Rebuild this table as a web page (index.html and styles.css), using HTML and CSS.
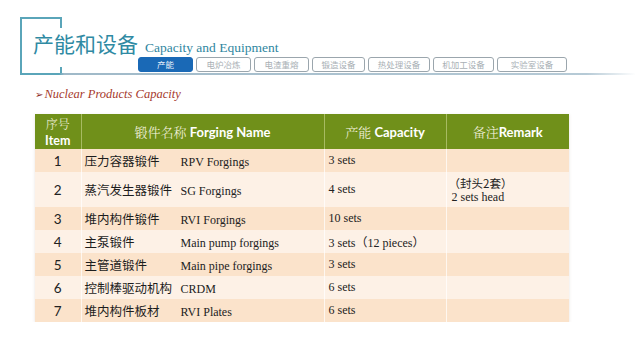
FILE: index.html
```html
<!DOCTYPE html>
<html lang="zh">
<head>
    <meta charset="UTF-8">
    <title>产能和设备 Capacity and Equipment</title>
    <link rel="stylesheet" href="styles.css">
</head>
<body>
    <header class="head">
        <div class="frame"></div>
        <h1 class="title"><span class="title-cn">产能和设备</span><span class="title-en">Capacity and Equipment</span></h1>
        <nav class="tabs">
            <span class="tab active" style="width:55px">产能</span>
            <span class="tab" style="width:55px">电炉冶炼</span>
            <span class="tab" style="width:55px">电渣重熔</span>
            <span class="tab" style="width:53px">锻造设备</span>
            <span class="tab" style="width:62px">热处理设备</span>
            <span class="tab" style="width:61px">机加工设备</span>
            <span class="tab" style="width:70px">实验室设备</span>
        </nav>
    </header>

    <main class="content">
        <p class="subtitle"><span class="arrow">➢</span>Nuclear Products Capacity</p>

        <table class="cap">
            <colgroup>
                <col style="width:46px">
                <col style="width:243px">
                <col style="width:122px">
                <col style="width:123px">
            </colgroup>
            <thead>
                <tr>
                    <th class="item"><span class="cn">序号</span><span class="en">Item</span></th>
                    <th><span class="cn">锻件名称</span> <span class="en">Forging Name</span></th>
                    <th><span class="cn">产能</span> <span class="en">Capacity</span></th>
                    <th><span class="cn">备注</span><span class="en">Remark</span></th>
                </tr>
            </thead>
            <tbody>
                <tr>
                    <td class="num">1</td>
                    <td class="name"><span class="name-cn">压力容器锻件</span><span class="name-en">RPV Forgings</span></td>
                    <td class="qty">3 sets</td>
                    <td></td>
                </tr>
                <tr class="tall">
                    <td class="num">2</td>
                    <td class="name"><span class="name-cn">蒸汽发生器锻件</span><span class="name-en">SG Forgings</span></td>
                    <td class="qty">4 sets</td>
                    <td class="note"><span class="note-cn">（封头2套）</span><span class="note-en">2 sets head</span></td>
                </tr>
                <tr>
                    <td class="num">3</td>
                    <td class="name"><span class="name-cn">堆内构件锻件</span><span class="name-en">RVI Forgings</span></td>
                    <td class="qty">10 sets</td>
                    <td></td>
                </tr>
                <tr>
                    <td class="num">4</td>
                    <td class="name"><span class="name-cn">主泵锻件</span><span class="name-en">Main pump forgings</span></td>
                    <td class="qty">3 sets（12 pieces）</td>
                    <td></td>
                </tr>
                <tr>
                    <td class="num">5</td>
                    <td class="name"><span class="name-cn">主管道锻件</span><span class="name-en">Main pipe forgings</span></td>
                    <td class="qty">3 sets</td>
                    <td></td>
                </tr>
                <tr>
                    <td class="num">6</td>
                    <td class="name"><span class="name-cn">控制棒驱动机构</span><span class="name-en">CRDM</span></td>
                    <td class="qty">6 sets</td>
                    <td></td>
                </tr>
                <tr>
                    <td class="num">7</td>
                    <td class="name"><span class="name-cn">堆内构件板材</span><span class="name-en">RVI Plates</span></td>
                    <td class="qty">6 sets</td>
                    <td></td>
                </tr>
            </tbody>
        </table>
    </main>
</body>
</html>
```

FILE: styles.css
```css
body {
    margin: 0;
    background: #ffffff;
    font-family: "Liberation Serif", "Noto Sans CJK SC", serif;
    color: #222;
}

/* header with the bracket frame */
.head {
    position: relative;
    margin: 17px 5px 0 20px;
    padding: 12px 0 1px;
    border-bottom: 2px solid #a9c0cd;
    border-image: linear-gradient(to right, #5aa5b9 0, #5aa5b9 40px, #9fb9c8 45px, #b6cad6 92%, rgba(220,230,236,0) 100%) 1;
}
.frame {
    position: absolute;
    left: 0;
    top: 0;
    bottom: 0;
    width: 38px;
    border-left: 2px solid #5aa5b9;
    border-top: 2px solid #5aa5b9;
}
.frame::before,
.frame::after {
    content: "";
    position: absolute;
    right: -2px;
    width: 2px;
    background: #5aa5b9;
}
.frame::before {
    top: -2px;
    height: 13px;
}
.frame::after {
    bottom: 0;
    height: 6px;
}
.title {
    position: relative;
    margin: 0 0 4px 13px;
    font-weight: normal;
    line-height: 24px;
    height: 24px;
    color: #2f8aa3;
    white-space: nowrap;
}
.title-cn {
    font-family: "Noto Sans CJK SC", sans-serif;
    font-size: 21px;
    font-weight: 400;
    background: #fff;
}
.title-en {
    font-family: "Liberation Serif", serif;
    font-size: 13.5px;
    margin-left: 7px;
    color: #2f86a0;
}

.tabs {
    display: flex;
    gap: 3px;
    margin-left: 118px;
}
.tab {
    box-sizing: border-box;
    height: 15px;
    border: 1px solid #9ba6ad;
    border-radius: 3px;
    background: #fff;
    font-family: "Noto Sans CJK SC", sans-serif;
    font-size: 8.5px;
    line-height: 13px;
    text-align: center;
    color: #a9b0b5;
}
.tab.active {
    background: #1a69b6;
    border-color: #1a69b6;
    color: #eaf2fb;
}

/* content */
.content {
    padding-left: 35px;
}
.subtitle {
    margin: 11px 0 11px;
    line-height: 16px;
    font-style: italic;
    font-size: 12.5px;
    color: #a63a2c;
}
.arrow {
    font-family: "DejaVu Sans", sans-serif;
    font-style: normal;
    font-size: 10px;
    color: #8c2a1e;
    margin-right: 1px;
}

.cap {
    width: 534px;
    border-collapse: collapse;
    table-layout: fixed;
    box-shadow: 0 1px 3px rgba(120, 100, 80, 0.18);
}
.cap th {
    height: 35px;
    padding: 0;
    background: #70901a;
    color: #fbf7e4;
    font-weight: normal;
    font-size: 13px;
    line-height: 15px;
    border-left: 1px solid #a7bb62;
    white-space: nowrap;
}
.cap th:first-child {
    border-left: none;
}
.cap th .cn {
    font-family: "Noto Serif CJK SC", "Noto Sans CJK SC", serif;
    font-weight: 300;
}
.cap th .en {
    font-family: Lato, "Liberation Sans", sans-serif;
    font-weight: bold;
    color: #ffffff;
}
.cap th.item .cn {
    display: block;
    font-size: 12px;
    line-height: 18px;
}
.cap th.item .en {
    display: block;
    font-size: 12.5px;
    line-height: 15px;
}
.cap td {
    height: 23px;
    padding: 0;
    border-left: 1px solid rgba(255, 255, 255, 0.7);
    white-space: nowrap;
    vertical-align: middle;
}
.cap td:first-child {
    border-left: none;
}
.cap tbody tr:nth-child(odd) {
    background: #fbe3cb;
}
.cap tbody tr:nth-child(even) {
    background: #fdf1e6;
}
.cap tr.tall td {
    height: 35px;
}
.num {
    text-align: center;
    font-family: Lato, "Liberation Sans", sans-serif;
    font-size: 13.5px;
    color: #222;
}
.name {
    padding-left: 3px !important;
}
.name-cn {
    display: inline-block;
    width: 96px;
    font-family: "Noto Sans CJK SC", sans-serif;
    font-size: 12.5px;
    color: #1d1d1d;
}
.name-en {
    font-family: "Liberation Serif", serif;
    font-size: 12px;
    color: #222;
}
.qty {
    padding-left: 4px !important;
    font-family: "Liberation Serif", "Noto Sans CJK SC", serif;
    font-size: 12px;
}
.note {
    padding-left: 2px !important;
    line-height: 14px;
}
.note-cn {
    display: block;
    font-family: "Noto Sans CJK SC", sans-serif;
    font-size: 11.5px;
}
.note-en {
    display: block;
    padding-left: 3px;
    font-family: "Liberation Serif", serif;
    font-size: 12px;
}
```
